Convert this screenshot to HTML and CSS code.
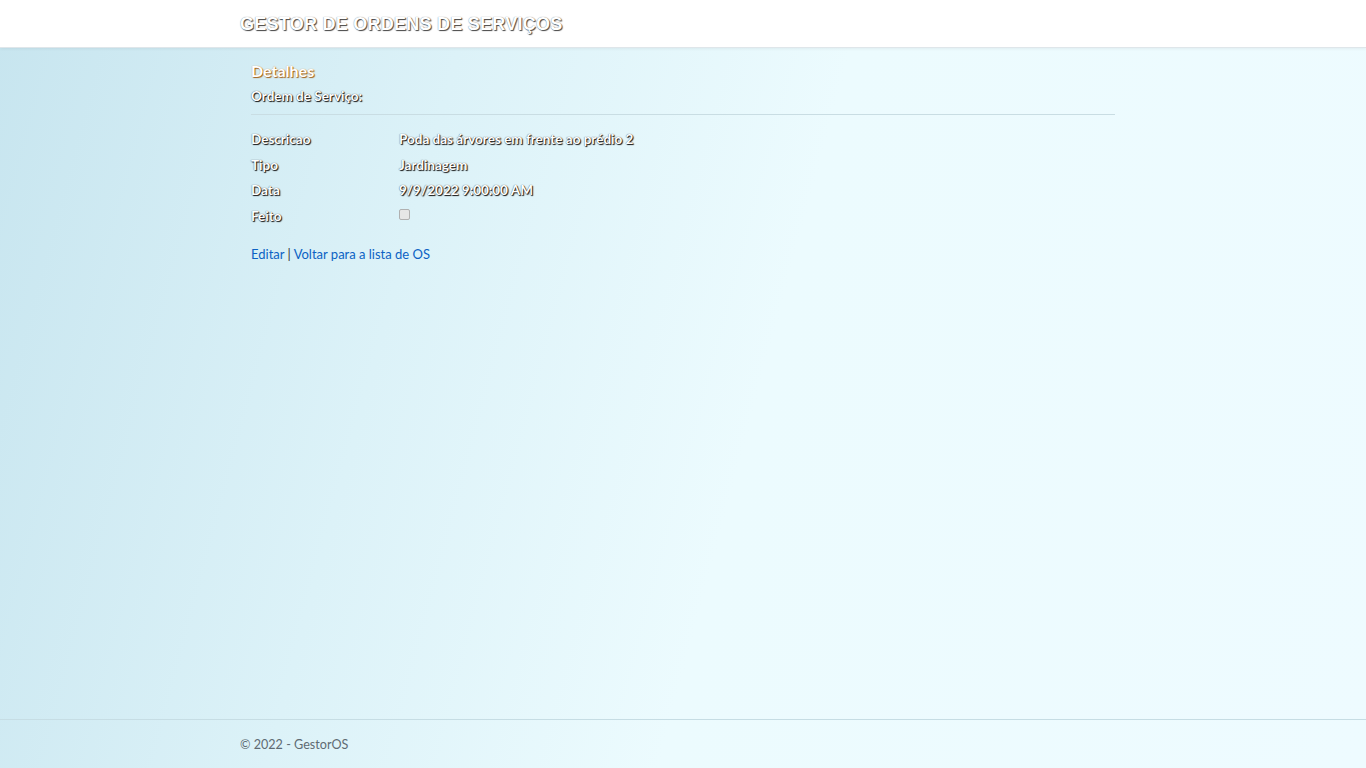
FILE: index.html
```html
<!DOCTYPE html>
<html lang="pt">
<head>
<meta charset="utf-8">
<title>Detalhes - GestorOS</title>
<link rel="stylesheet" href="styles.css">
</head>
<body>
<header class="topbar">
  <div class="container">
    <span class="brand">GESTOR DE ORDENS DE SERVIÇOS</span>
  </div>
</header>
<div class="page">
  <main class="container main">
    <h1 class="title">Detalhes</h1>
    <h4 class="subtitle">Ordem de Serviço:</h4>
    <hr class="rule">
    <dl class="details">
      <dt>Descricao</dt><dd>Poda das árvores em frente ao prédio 2</dd>
      <dt>Tipo</dt><dd>Jardinagem</dd>
      <dt>Data</dt><dd>9/9/2022 9:00:00 AM</dd>
      <dt>Feito</dt><dd><span class="check"></span></dd>
    </dl>
    <div class="links"><a href="#">Editar</a> | <a href="#">Voltar para a lista de OS</a></div>
  </main>
  <footer class="footer">
    <div class="container">© 2022 - GestorOS</div>
  </footer>
</div>
</body>
</html>
```
FILE: styles.css
```css
html, body { margin: 0; padding: 0; height: 100%; }
body {
  font-family: "Lato", "Open Sans", sans-serif;
  font-size: 14px;
  color: #212529;
  background: linear-gradient(105deg, #c7e5ef 0%, #dcf2f8 30%, #ecfbfe 55%, #eefbff 100%);
  display: flex;
  flex-direction: column;
  min-height: 768px;
}
.container { width: 886px; margin: 0 auto; box-sizing: border-box; }
.topbar {
  background: #fff;
  height: 48px;
  border-bottom: 1px solid #dfe6ea;
  box-shadow: 0 1px 3px rgba(0,0,0,0.06);
  box-sizing: border-box;
}
.topbar .container { display: flex; align-items: center; height: 47px; padding-top: 2px; }
.brand {
  font-family: "Liberation Sans", Arial, sans-serif;
  font-weight: bold;
  font-size: 18px;
  color: #fff;
  letter-spacing: 0.25px;
  text-shadow: 1px 1px 1px #444, 0 0 1px #777;
}
.page { flex: 1; display: flex; flex-direction: column; }
.main { flex: 1; padding: 13px 11px 0; }
.title {
  margin: 0;
  font-size: 16px;
  font-weight: bold;
  color: #fff;
  line-height: 20px;
  text-shadow: 1px 1px 1px #a0601a, 0 0 1px #c88a40;
}
.subtitle {
  margin: 5px 0 0;
  font-size: 13.5px;
  font-weight: bold;
  line-height: 20px;
  color: #fff;
  text-shadow: 1px 1px 1px #111, 0 0 1px #333;
}
.rule { border: 0; border-top: 1px solid #c9dde3; margin: 8px 0 14px; }
.details {
  display: grid;
  grid-template-columns: 148px 1fr;
  row-gap: 5.5px;
  margin: 0;
  font-size: 13.5px;
  font-weight: bold;
  line-height: 20px;
  color: #fff;
  text-shadow: 1px 1px 1px #111, 0 0 1px #333;
}
.details dt, .details dd { margin: 0; }
.check {
  display: inline-block;
  width: 9px; height: 9px;
  border: 1px solid #b0b0b0;
  border-radius: 2px;
  background: #e6e6e6;
  vertical-align: middle;
  margin-top: -6px;
}
.links { margin-top: 20px; font-size: 13px; color: #333; }
.links a { color: #0b62c4; text-decoration: none; }
.footer {
  border-top: 1px solid #c6dde4;
  height: 49px;
  box-sizing: border-box;
  display: flex;
  align-items: center;
  color: #5f6b73;
  font-size: 12.6px;
}
```
